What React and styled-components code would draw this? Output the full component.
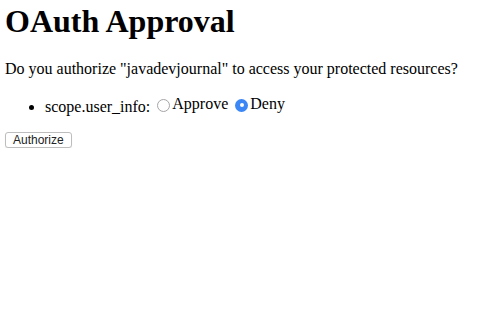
import React, { useState } from "react";
import styled, { createGlobalStyle } from "styled-components";

const GlobalStyle = createGlobalStyle`
  html, body {
    margin: 0;
    padding: 0;
    background: #ffffff;
  }
  body {
    padding: 0 5px;
    font-family: "Liberation Serif", "Times New Roman", serif;
    color: #000000;
  }
`;

export default function App() {
  const [choice, setChoice] = useState("deny");

  return (
    <>
      <GlobalStyle />
      <Title>OAuth Approval</Title>
      <Question>
        Do you authorize "javadevjournal" to access your protected resources?
      </Question>
      <ScopeForm onSubmit={e => e.preventDefault()}>
        <ScopeList>
          <ScopeItem>
            scope.user_info:{" "}
            <Choice>
              <Radio
                type="radio"
                name="scope.user_info"
                checked={choice === "approve"}
                onChange={() => setChoice("approve")}
              />
              Approve
            </Choice>{" "}
            <Choice>
              <Radio
                type="radio"
                name="scope.user_info"
                checked={choice === "deny"}
                onChange={() => setChoice("deny")}
              />
              Deny
            </Choice>
          </ScopeItem>
        </ScopeList>
        <AuthorizeButton type="submit">Authorize</AuthorizeButton>
      </ScopeForm>
    </>
  );
}

const Title = styled.h1`
  margin: 0;
  padding-top: 3px;
  font-size: 32px;
  line-height: 37px;
  font-weight: bold;
`;

const Question = styled.p`
  margin: 20px 0 0;
  font-size: 16px;
  line-height: 18px;
`;

const ScopeForm = styled.form`
  margin: 0;
`;

const ScopeList = styled.ul`
  margin: 17px 0 0;
  padding-left: 40px;
  list-style: disc;
`;

const ScopeItem = styled.li`
  font-size: 16px;
  line-height: 18px;
`;

const Choice = styled.label`
  display: inline-flex;
  align-items: center;
`;

const Radio = styled.input`
  appearance: none;
  -webkit-appearance: none;
  width: 13px;
  height: 13px;
  margin: 2px 2px 0 3px;
  border-radius: 50%;
  border: 1px solid #a5a5a5;
  background: #ffffff;
  box-sizing: border-box;
  position: relative;

  &:checked {
    border: none;
    background: #3b87f5;
  }
  &:checked::after {
    content: "";
    position: absolute;
    left: 4.5px;
    top: 4.5px;
    width: 4px;
    height: 4px;
    border-radius: 50%;
    background: #ffffff;
  }
`;

const AuthorizeButton = styled.button`
  display: block;
  margin-top: 16px;
  padding: 0 7px;
  height: 16px;
  font-family: "Liberation Sans", Arial, sans-serif;
  font-size: 12px;
  line-height: 14px;
  color: #222222;
  background: #ffffff;
  border: 1px solid #bdbdbd;
  border-radius: 3px;
  box-shadow: 0 1px 1px rgba(0, 0, 0, 0.08);
`;
